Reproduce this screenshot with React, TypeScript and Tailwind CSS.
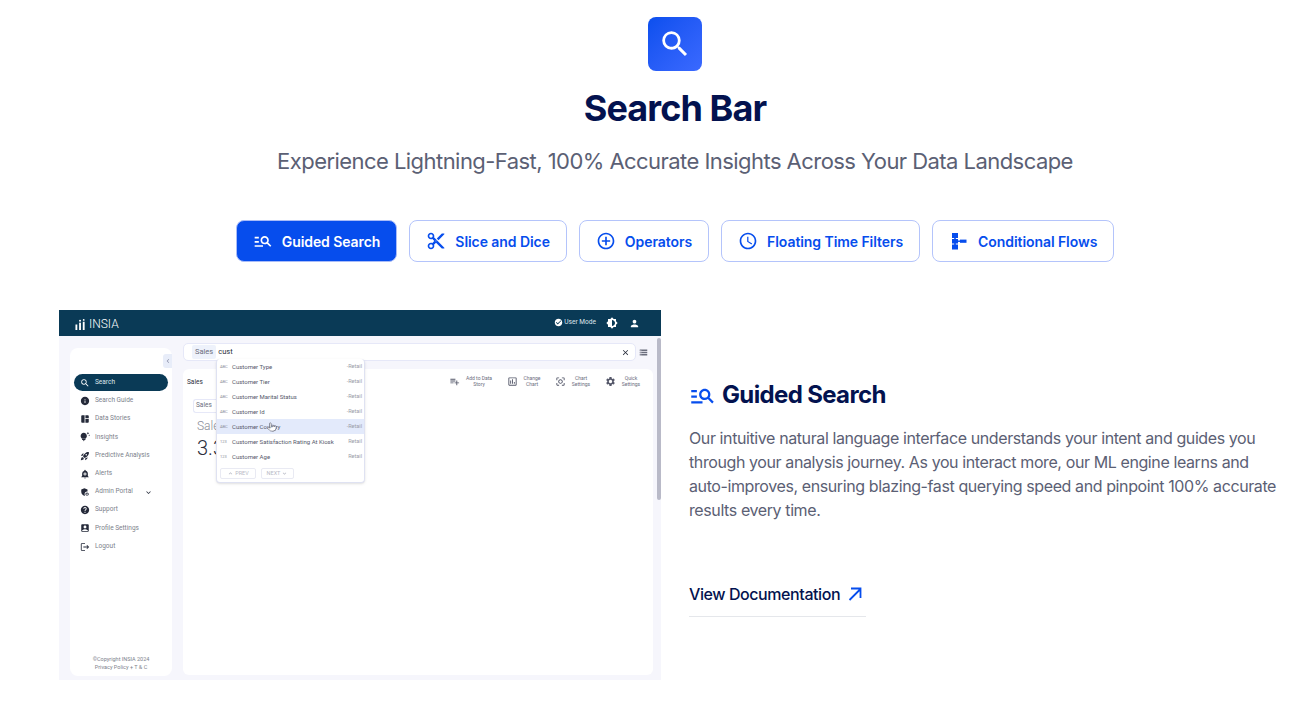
import {
  MdAccountBox,
  MdAddAlert,
  MdAdminPanelSettings,
  MdBrightness6,
  MdCheckCircle,
  MdChevronLeft,
  MdClose,
  MdHelp,
  MdInfo,
  MdKeyboardArrowDown,
  MdKeyboardArrowUp,
  MdLogout,
  MdManageSearch,
  MdOutlineAccessTime,
  MdOutlineAddCircleOutline,
  MdOutlineCenterFocusStrong,
  MdOutlineContentCut,
  MdOutlineInsertChart,
  MdPerson,
  MdPlaylistAdd,
  MdRocketLaunch,
  MdSearch,
  MdSettings,
  MdSpaceDashboard,
  MdStorage,
  MdTipsAndUpdates,
} from "react-icons/md";
import { Pointer } from "lucide-react";

function FlowIcon({ className }: { className?: string }) {
  return (
    <svg viewBox="0 0 20 20" className={className} fill="currentColor">
      <rect x="3" y="2" width="6" height="5" />
      <rect x="3" y="8" width="6" height="4.5" />
      <rect x="3" y="13.5" width="6" height="5" />
      <rect x="5.2" y="6" width="1.6" height="9" />
      <rect x="11" y="8.6" width="6.5" height="3.2" />
      <rect x="8" y="9.5" width="4" height="1.4" />
    </svg>
  );
}

function InsiaLogo() {
  return (
    <svg viewBox="0 0 12 12" className="w-[11px] h-[11px]" fill="currentColor">
      <rect x="0.5" y="6" width="2" height="6" />
      <rect x="4.5" y="4" width="2" height="8" />
      <circle cx="5.5" cy="2" r="1.1" />
      <rect x="8.5" y="3" width="2" height="9" />
      <circle cx="9.5" cy="1" r="1" />
    </svg>
  );
}

const tabs = [
  { label: "Guided Search", icon: MdManageSearch, active: true },
  { label: "Slice and Dice", icon: MdOutlineContentCut },
  { label: "Operators", icon: MdOutlineAddCircleOutline },
  { label: "Floating Time Filters", icon: MdOutlineAccessTime },
  { label: "Conditional Flows", icon: FlowIcon },
];

const navItems = [
  { label: "Search Guide", icon: MdInfo },
  { label: "Data Stories", icon: MdSpaceDashboard },
  { label: "Insights", icon: MdTipsAndUpdates },
  { label: "Predictive Analysis", icon: MdRocketLaunch },
  { label: "Alerts", icon: MdAddAlert },
  { label: "Admin Portal", icon: MdAdminPanelSettings, caret: true },
  { label: "Support", icon: MdHelp },
  { label: "Profile Settings", icon: MdAccountBox },
  { label: "Logout", icon: MdLogout },
];

const suggestions = [
  { kind: "ABC", label: "Customer Type", src: "-Retail" },
  { kind: "ABC", label: "Customer Tier", src: "-Retail" },
  { kind: "ABC", label: "Customer Marital Status", src: "-Retail" },
  { kind: "ABC", label: "Customer Id", src: "-Retail" },
  { kind: "ABC", label: "Customer Country", src: "-Retail", active: true },
  { kind: "123", label: "Customer Satisfaction Rating At Kiosk", src: "Retail" },
  { kind: "123", label: "Customer Age", src: "Retail" },
];

const chartActions = [
  { label: "Add to Data Story", icon: MdPlaylistAdd, width: "w-[28px]" },
  { label: "Change Chart", icon: MdOutlineInsertChart, width: "w-[18px]" },
  { label: "Chart Settings", icon: MdOutlineCenterFocusStrong, width: "w-[20px]" },
  { label: "Quick Settings", icon: MdSettings, width: "w-[20px]" },
];

function ProductShot() {
  return (
    <div className="w-[602px] h-[370px] shrink-0 flex flex-col overflow-hidden bg-[#f6f6fc] font-['Roboto',sans-serif] text-[#6b6e7d]">
      {/* top bar */}
      <div className="h-[26px] shrink-0 flex items-center justify-between pl-[16px] pr-[21px] bg-[#0a3a56] text-white">
        <div className="flex items-center gap-[3px] pt-[2px] text-[12px] leading-none font-light">
          <InsiaLogo />
          INSIA
        </div>
        <div className="flex items-center gap-[10px]">
          <div className="flex items-center gap-[1px] text-[6.6px] text-[#dfe6ec]">
            <MdCheckCircle className="w-[9px] h-[9px] text-white" />
            User Mode
          </div>
          <MdBrightness6 className="w-[12px] h-[12px]" />
          <MdPerson className="w-[11px] h-[11px] ml-[1px]" />
        </div>
      </div>

      <div className="flex-1 flex min-h-0">
        {/* sidebar */}
        <div className="relative w-[102px] shrink-0 ml-[11px] mt-[12px] mb-[4px] bg-white rounded-[8px] flex flex-col">
          <div className="absolute right-0 top-[6px] w-[9px] h-[14px] bg-[#e8edf9] rounded-l-[3px] flex items-center justify-center">
            <MdChevronLeft className="w-[8px] h-[8px] text-[#8a90a8]" />
          </div>
          <div className="mt-[26px] mx-[4px] h-[17px] rounded-full bg-[#0a3a56] text-[#dfe6ec] flex items-center gap-[5px] px-[6px] text-[6.5px]">
            <MdSearch className="w-[10px] h-[10px] text-white" />
            Search
          </div>
          <div className="mt-[1px] flex flex-col">
            {navItems.map((item) => (
              <div key={item.label} className="h-[18.2px] flex items-center gap-[5px] pl-[10px] text-[6.5px] text-[#7d7f8c]">
                <item.icon className="w-[10px] h-[10px] shrink-0 text-[#252a3a]" />
                <span className="whitespace-nowrap">{item.label}</span>
                {item.caret && <MdKeyboardArrowDown className="ml-[6px] w-[9px] h-[9px] text-[#252a3a]" />}
              </div>
            ))}
          </div>
          <div className="mt-auto pb-[5px] text-center text-[5.5px] leading-[8px] text-[#7d7f8c]">
            <div>©Copyright INSIA 2024</div>
            <div>Privacy Policy + T &amp; C</div>
          </div>
        </div>

        {/* main */}
        <div className="relative flex-1 min-w-0 ml-[11px] mr-[8px] mt-[7px] mb-[5px] flex flex-col">
          <div className="flex items-center gap-[3px]">
            <div className="w-[453px] h-[18px] shrink-0 rounded-[5px] bg-white border border-[#e6e8f8] flex items-center pl-[8px] pr-[5px] text-[7.5px]">
              <span className="bg-[#eef2fb] px-[3px] py-[1px] rounded-[2px]">Sales</span>
              <span className="ml-[2px] text-[#2a2d3a]">cust</span>
              <MdClose className="ml-auto w-[9px] h-[9px] text-[#252a3a]" />
            </div>
            <MdStorage className="w-[9px] h-[9px] text-[#6b6e7d]" />
          </div>

          <div className="mt-[8px] flex-1 bg-white rounded-[6px] relative">
            <div className="flex items-start justify-between pl-[4px] pr-[12px] pt-[7px]">
              <span className="text-[6.5px] mt-[2px] text-[#2a2d3a]">Sales</span>
              <div className="flex items-center gap-[14px]">
                {chartActions.map((a) => (
                  <div key={a.label} className="flex items-center gap-[5px]">
                    <a.icon className="w-[11px] h-[11px] text-[#55586a]" />
                    <span className={`${a.width} text-center text-[5px] leading-[5.5px]`}>{a.label}</span>
                  </div>
                ))}
              </div>
            </div>
            <div className="mt-[11px] ml-[10px] w-[23px] h-[14px] border border-r-0 border-[#e6e8f8] rounded-l-[3px] text-[6.5px] pl-[2px] leading-[10px]">
              Sales
            </div>
            <div className="mt-[7px] ml-[14px] text-[12px] leading-none font-light text-[#8a8c98]">Sales</div>
            <div className="mt-[6px] ml-[14px] text-[20px] leading-none font-light text-[#2a2d3a]">3.3</div>

            {/* suggestion dropdown, sits over the chart title */}
            <div className="absolute left-[33px] top-[-10px] w-[149px] h-[124px] bg-white rounded-[4px] border border-t-0 border-[#dfe2f2] shadow-sm text-[6px]">
              {suggestions.map((s) => (
                <div key={s.label} className={`h-[15px] flex items-center pl-[3px] pr-[2px] ${s.active ? "bg-[#e3eafb]" : ""}`}>
                  <span className="w-[12px] text-[4px] text-[#8a8c98]">{s.kind}</span>
                  <span className="whitespace-nowrap text-[#55586a]">{s.label}</span>
                  <span className="ml-auto text-[5.5px] text-[#9a9ca8]">{s.src}</span>
                </div>
              ))}
              <div className="flex items-center gap-[5px] pl-[3px] mt-[4px] text-[5.5px] text-[#b8bac6]">
                <div className="h-[11px] w-[36px] border border-[#e9eaf3] rounded-[2px] flex items-center justify-center gap-[1px]">
                  <MdKeyboardArrowUp className="w-[7px] h-[7px]" /> PREV
                </div>
                <div className="h-[11px] w-[33px] border border-[#e9eaf3] rounded-[2px] flex items-center justify-center gap-[1px]">
                  NEXT <MdKeyboardArrowDown className="w-[7px] h-[7px]" />
                </div>
              </div>
              {/* mouse cursor */}
              <Pointer className="absolute left-[50px] top-[63px] w-[10px] h-[10px] text-[#55586a] fill-white" strokeWidth={1.5} />
            </div>
          </div>

          {/* page scrollbar */}
          <div className="absolute right-[-8px] top-[-5px] w-[4px] h-[162px] bg-[#b9bac8] rounded-full" />
        </div>
      </div>
    </div>
  );
}

export default function App() {
  return (
    <div className="w-full h-[703px] overflow-hidden bg-white pl-[59px] pr-[10px] pt-[17px] font-['Inter',sans-serif]">
      {/* ── Heading ───────────────────────────────────────────── */}
      <div className="flex flex-col items-center">
        <div className="w-[54px] h-[54px] rounded-[8px] bg-gradient-to-br from-[#0a4fee] to-[#3a69ff] flex items-center justify-center">
          <MdSearch className="w-[34px] h-[34px] text-white" />
        </div>
        <h1 className="mt-[15px] text-[36px] leading-[44px] font-bold tracking-[-0.9px] text-[#03124f]">Search Bar</h1>
        <p className="mt-[15px] text-[22px] leading-[32px] tracking-[-0.55px] text-[#5b6074]">
          Experience Lightning-Fast, 100% Accurate Insights Across Your Data Landscape
        </p>
      </div>

      {/* ── Tabs ──────────────────────────────────────────────── */}
      <div className="mt-[43px] flex justify-center gap-[12px]">
        {tabs.map((t) => (
          <button
            key={t.label}
            className={`h-[42px] flex items-center gap-[9px] px-[16px] rounded-[8px] border text-[14px] font-semibold tracking-[-0.07px] ${
              t.active
                ? "bg-[#064ded] border-[#a9bcf8] text-white"
                : "bg-white border-[#b4c4fb] text-[#064ded]"
            }`}
          >
            <t.icon className="w-[20px] h-[20px]" />
            {t.label}
          </button>
        ))}
      </div>

      {/* ── Feature ───────────────────────────────────────────── */}
      <div className="mt-[48px] flex gap-[28px]">
        <ProductShot />
        <div className="flex-1 min-w-0 pt-[68px]">
          <h2 className="flex items-center gap-[6px] text-[24px] leading-[34px] font-bold tracking-[-0.65px] text-[#03124f]">
            <MdManageSearch className="w-[27px] h-[27px] text-[#064ded]" />
            Guided Search
          </h2>
          <p className="mt-[14px] text-[16px] leading-[24px] tracking-[-0.4px] text-[#5b6074]">
            Our intuitive natural language interface understands your intent and guides you through your analysis journey. As you interact more, our ML engine learns and auto-improves, ensuring blazing-fast querying speed and pinpoint 100% accurate results every time.
          </p>
          <a className="mt-[59px] w-[177px] h-[36px] flex items-start gap-[8px] pt-[1px] border-b border-[#e5e7eb] text-[16px] leading-[24px] font-medium tracking-[-0.42px] whitespace-nowrap text-[#03124f]">
            View Documentation
            <svg viewBox="0 0 14 14" className="w-[14px] h-[14px] mt-[5px] text-[#064ded]" fill="none" stroke="currentColor" strokeWidth={1.8}>
              <path d="M1.5 13 L12.5 2 M3 1.5 H12.5 V11" />
            </svg>
          </a>
        </div>
      </div>
    </div>
  );
}
